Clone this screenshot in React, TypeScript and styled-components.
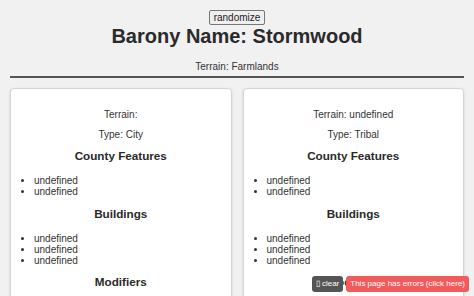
import styled, { createGlobalStyle } from "styled-components";

const GlobalStyle = createGlobalStyle`
    html, body {
        margin: 0;
        padding: 0;
        background-color: #f1f1f1;
    }
    body {
        font-family: "Liberation Sans", Arial, sans-serif;
        color: #333;
    }
`;

const Page = styled.div`
    padding: 10px 10px 0;
    display: flex;
    flex-direction: column;
    align-items: center;
`;

const RandomButton = styled.button`
    font-family: "Liberation Sans", Arial, sans-serif;
    font-size: 10px;
    line-height: 13px;
    height: 15px;
    padding: 0 4px;
    color: #222;
    background-color: #efefef;
    border: 1px solid #767676;
    border-radius: 2px;
`;

const Title = styled.h1`
    margin: 0;
    font-size: 20px;
    line-height: 23px;
    color: #2a2a2a;
`;

const SubLine = styled.p`
    margin: 13px 0 3px;
    font-size: 10px;
    line-height: 12px;
    color: #333;
`;

const Rule = styled.hr`
    align-self: stretch;
    margin: 0;
    border: none;
    border-top: 2px solid #555;
`;

const CardGrid = styled.section`
    align-self: stretch;
    display: grid;
    grid-template-columns: 1fr 1fr;
    gap: 11px;
    margin-top: 10px;
`;

const Card = styled.div`
    background-color: #fff;
    border: 1px solid #d4d4d4;
    border-radius: 4px;
    box-shadow: 0 1px 3px rgba(0, 0, 0, 0.12);
    padding: 20px 10px 10px;
    text-align: center;
`;

const Line = styled.p`
    margin: 0 0 8px;
    font-size: 10px;
    line-height: 12px;
`;

const SectionTitle = styled.h3`
    margin: 8px 0;
    font-size: 11.7px;
    line-height: 14px;
    color: #2a2a2a;
`;

const List = styled.ul`
    margin: 12px 0 9px;
    padding-left: 13px;
    text-align: left;
    font-size: 10px;
    line-height: 11.3px;
`;

const Overlay = styled.div`
    position: fixed;
    right: 5px;
    bottom: 4px;
    display: flex;
    gap: 3px;
`;

const OverlayButton = styled.div<{ $tone: "dark" | "red" }>`
    height: 16px;
    line-height: 16px;
    padding: 0 4px;
    border-radius: 3px;
    font-size: 8px;
    color: #fff;
    background-color: ${(p) => (p.$tone === "red" ? "#f25b5b" : "#555")};
`;

type Region = {
    terrain: string;
    type: string;
    features: number;
    buildings: number;
};

const regions: Region[] = [
    { terrain: "", type: "City", features: 2, buildings: 3 },
    { terrain: "undefined", type: "Tribal", features: 2, buildings: 3 },
];

function RegionCard({ region }: { region: Region }) {
    return (
        <Card>
            <Line>Terrain: {region.terrain}</Line>
            <Line>Type: {region.type}</Line>
            <SectionTitle>County Features</SectionTitle>
            <List>
                {Array.from({ length: region.features }).map((_, i) => (
                    <li key={i}>undefined</li>
                ))}
            </List>
            <SectionTitle>Buildings</SectionTitle>
            <List>
                {Array.from({ length: region.buildings }).map((_, i) => (
                    <li key={i}>undefined</li>
                ))}
            </List>
            <SectionTitle>Modifiers</SectionTitle>
            <List>
                <li>undefined</li>
            </List>
        </Card>
    );
}

export function App() {
    return (
        <>
            <GlobalStyle />
            <Page>
                <RandomButton>randomize</RandomButton>
                <Title>Barony Name: Stormwood</Title>
                <SubLine>Terrain: Farmlands</SubLine>
                <Rule />
                <CardGrid>
                    {regions.map((r, i) => (
                        <RegionCard key={i} region={r} />
                    ))}
                </CardGrid>
            </Page>
            <Overlay>
                <OverlayButton $tone="dark">&#9647; clear</OverlayButton>
                <OverlayButton $tone="red">This page has errors (click here)</OverlayButton>
            </Overlay>
        </>
    );
}

export default App;
